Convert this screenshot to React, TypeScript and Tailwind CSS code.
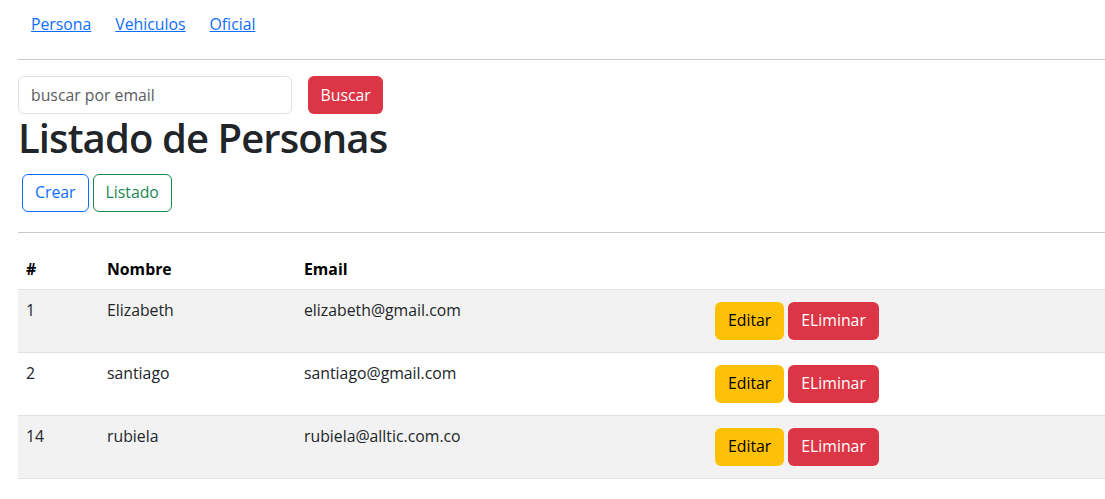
import React from "react";

interface Persona {
  id: number;
  nombre: string;
  email: string;
}

const personas: Persona[] = [
  { id: 1, nombre: "Elizabeth", email: "elizabeth@gmail.com" },
  { id: 2, nombre: "santiago", email: "santiago@gmail.com" },
  { id: 14, nombre: "rubiela", email: "rubiela@alltic.com.co" },
];

const NavBar: React.FC = () => {
  return (
    <nav className="flex pt-1">
      {["Persona", "Vehiculos", "Oficial"].map((item) => (
        <a key={item} href="#" className="px-[12px] py-2 leading-6 text-[#0d6efd] underline first:pl-[13px]">
          {item}
        </a>
      ))}
    </nav>
  );
};

const App: React.FC = () => {
  return (
    <div
      className="min-h-screen bg-white pl-[18px] text-[15.8px] text-[#212529]"
      style={{ fontFamily: '"Open Sans", sans-serif' }}
    >
      <NavBar />
      <hr className="mt-[15px] border-t border-[#c8c9ca]" />

      <div className="mt-4 flex gap-4">
        <input
          type="text"
          placeholder="buscar por email"
          className="h-[38px] w-[274px] rounded-[6px] border border-[#dee2e6] px-3 leading-6 placeholder:text-[#595c5f] outline-none"
        />
        <button className="h-[38px] rounded-[6px] bg-[#dc3545] px-[12.5px] text-white leading-6">Buscar</button>
      </div>

      <h1 className="mb-2 text-[40px] font-semibold leading-[48px] tracking-[-0.9px] text-[#212529]">
        Listado de Personas
      </h1>

      <div className="flex">
        <button className="m-1 h-[38px] rounded-[6px] border border-[#0d6efd] px-3 text-[#0d6efd]">Crear</button>
        <button className="m-1 ml-0 h-[38px] rounded-[6px] border border-[#198754] px-3 text-[#198754]">
          Listado
        </button>
      </div>

      <hr className="mt-4 border-t border-[#c8c9ca]" />

      <table className="mt-4 w-full border-collapse text-left">
        <thead>
          <tr className="border-b border-[#dee2e6]">
            <th className="w-[81px] p-2 font-bold leading-6 text-black">#</th>
            <th className="w-[197px] p-2 font-bold leading-6 text-black">Nombre</th>
            <th className="w-[407px] p-2 font-bold leading-6 text-black">Email</th>
            <th className="p-2"></th>
          </tr>
        </thead>
        <tbody>
          {personas.map((p, i) => (
            <tr key={p.id} className={`border-b border-[#dee2e6] align-top ${i % 2 === 0 ? "bg-[#f2f2f2]" : "bg-white"}`}>
              <td className="p-2 leading-6">{p.id}</td>
              <td className="p-2 leading-6">{p.nombre}</td>
              <td className="p-2 leading-6">{p.email}</td>
              <td className="p-2">
                <div className="m-1 flex gap-1">
                  <button className="h-[38px] rounded-[6px] bg-[#ffc107] px-[13px] text-black">Editar</button>
                  <button className="h-[38px] rounded-[6px] bg-[#dc3545] px-[13px] text-white">ELiminar</button>
                </div>
              </td>
            </tr>
          ))}
        </tbody>
      </table>
    </div>
  );
};

export default App;
